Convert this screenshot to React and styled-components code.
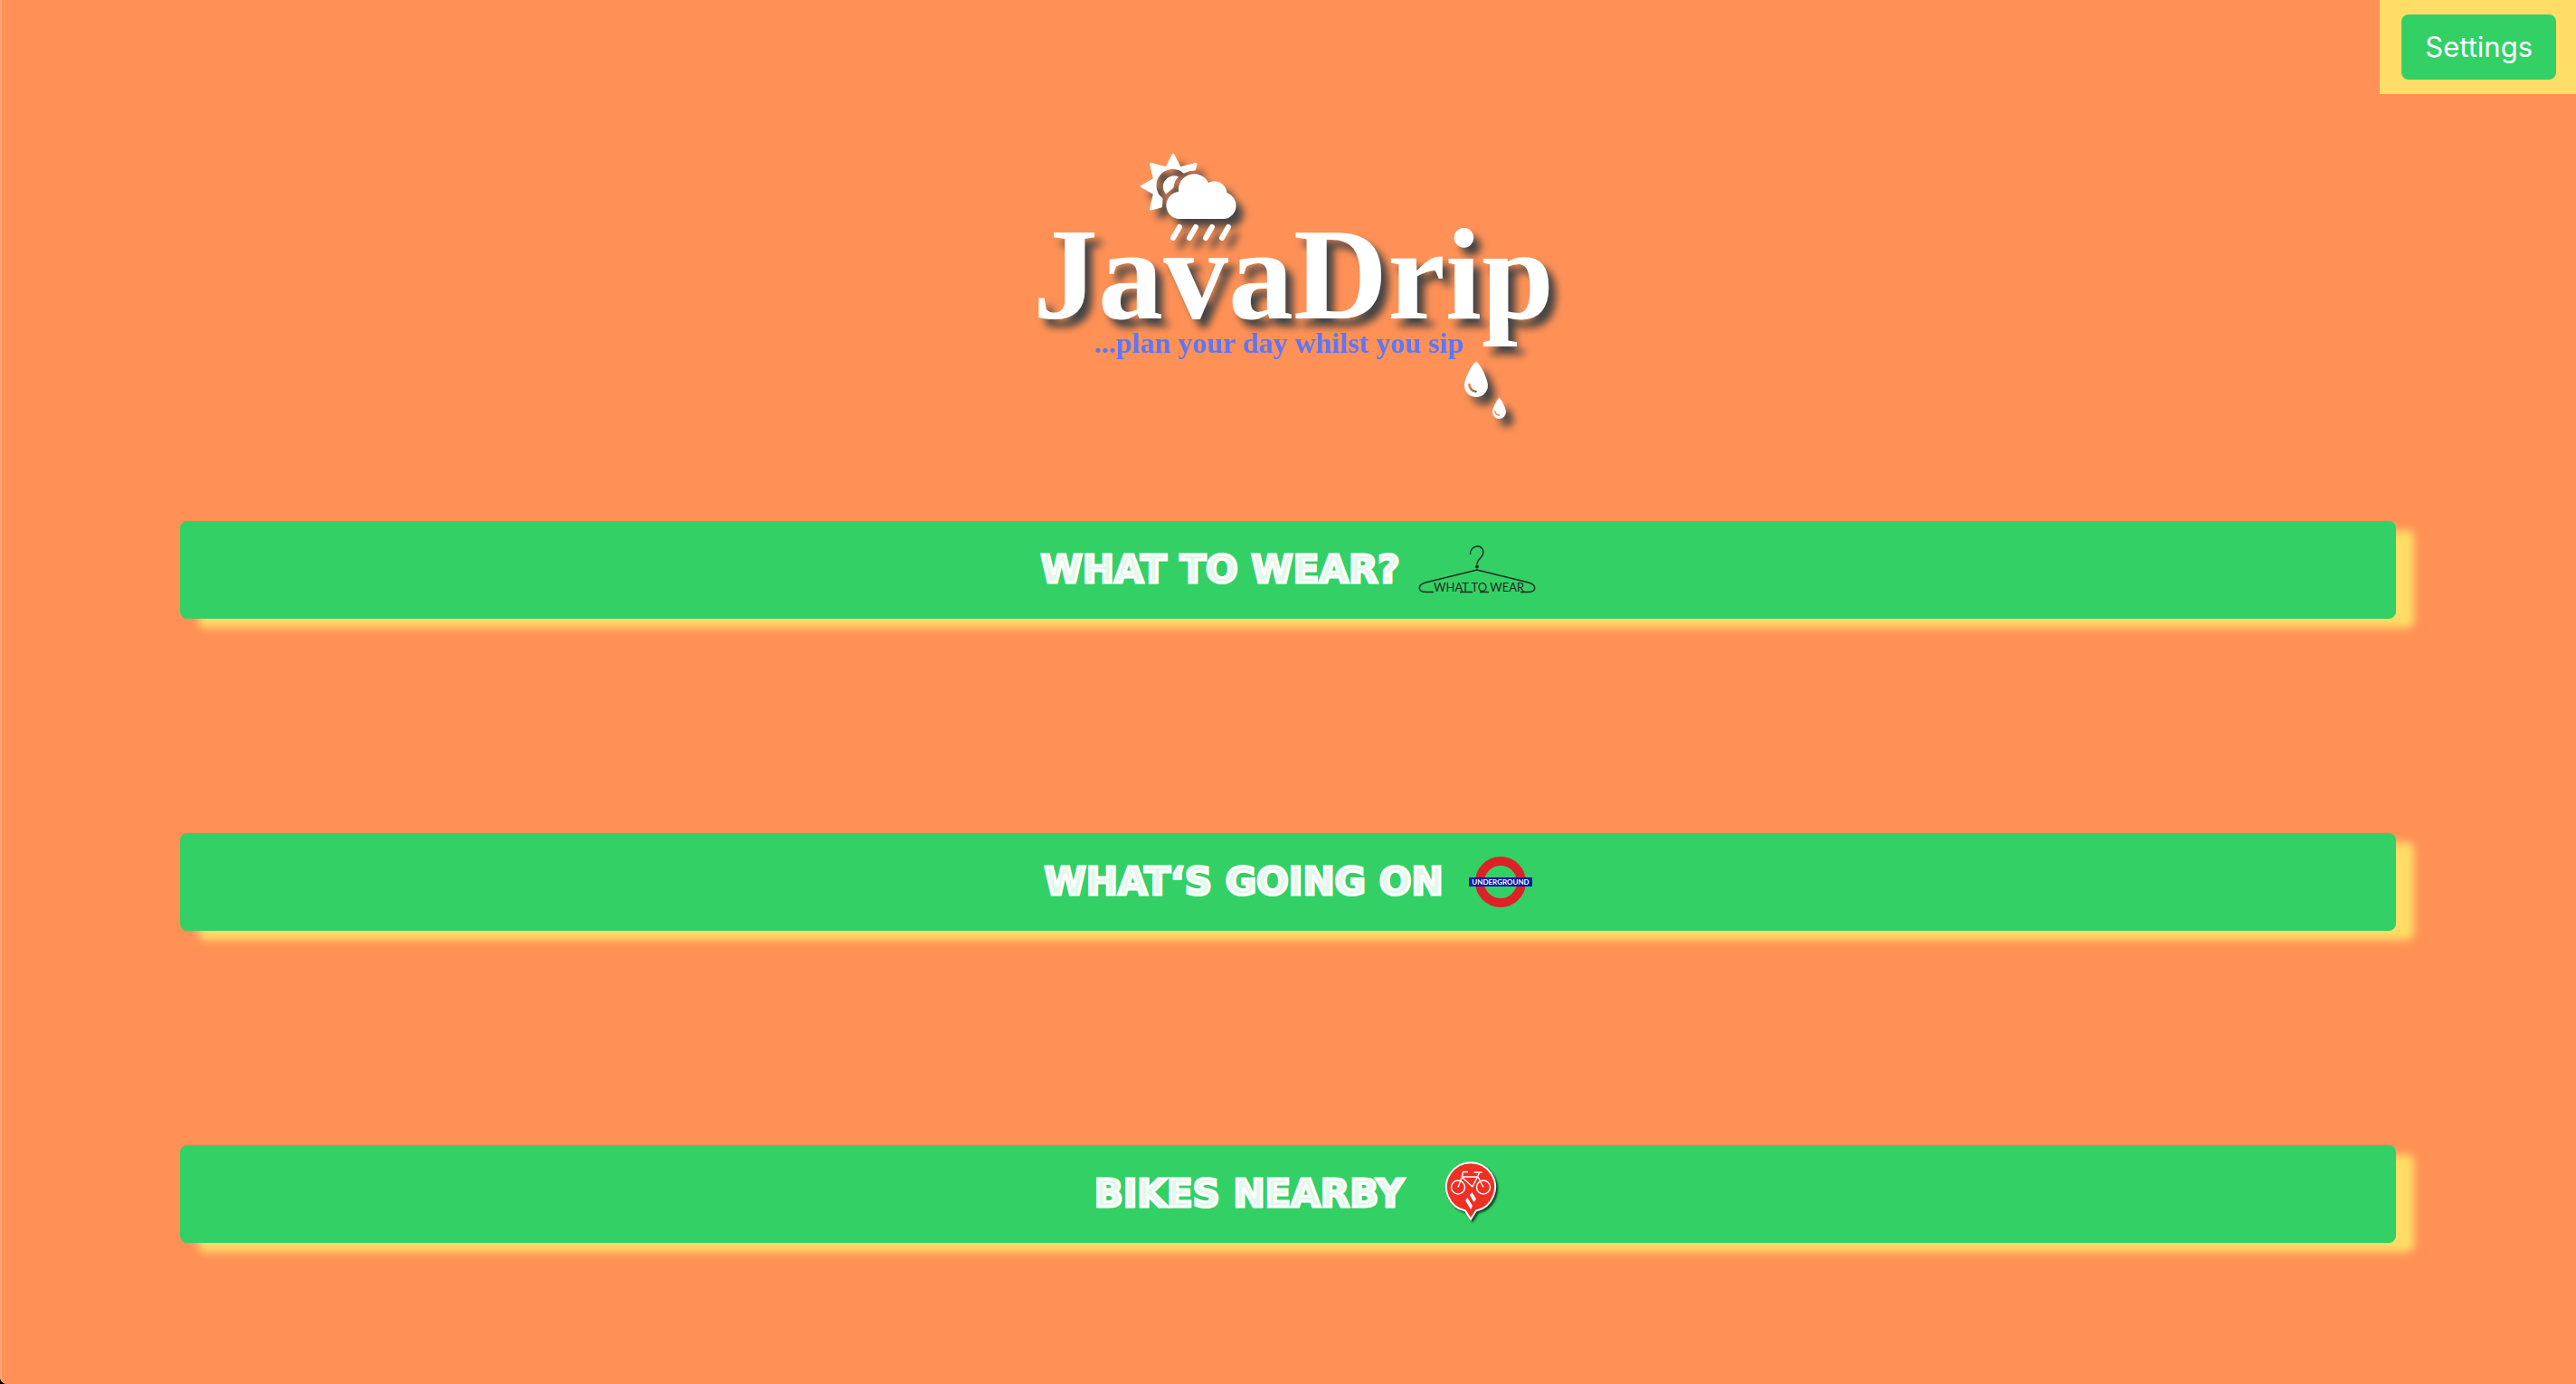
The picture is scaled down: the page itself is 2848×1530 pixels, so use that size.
import React from "react";
import styled, { createGlobalStyle } from "styled-components";

const colors = {
  page: "#ff9156",
  green: "#33d066",
  yellow: "#ffdd66",
  ink: "#1f2a24",
};

const GlobalStyle = createGlobalStyle`
  html { background: #000; }
  body { margin: 0; }
  *, *::before, *::after { box-sizing: border-box; }
`;

const Page = styled.div`
  min-height: 100vh;
  display: flex;
  flex-direction: column;
  background: ${colors.page};
  box-shadow: inset 2px 0 0 #ffa575;
  border-bottom-left-radius: 8px;
  font-family: Inter, "Liberation Sans", sans-serif;
`;

const Toolbar = styled.header`
  align-self: flex-end;
  padding: 16px 22px 16px 24px;
  background: ${colors.yellow};
`;

const SettingsButton = styled.button`
  display: block;
  height: 72px;
  padding: 0 26px;
  border: 0;
  border-radius: 8px;
  background: ${colors.green};
  color: #fff;
  font: 400 31px/40px Inter, "Liberation Sans", sans-serif;
  cursor: pointer;
`;

const Brand = styled.h1`
  display: flex;
  justify-content: center;
  margin: 46px 0 98px;
`;

const LogoArt = styled.svg`
  display: block;
  width: 600px;
  max-width: 100%;
  overflow: visible;
`;

const Raised = styled.g`
  fill: #fff;
  filter: drop-shadow(8px 9px 4px #444);
`;

const Wordmark = styled.text`
  font: 700 144px "Liberation Serif", serif;
`;

const Tagline = styled.text`
  fill: #5d76f5;
  font: 700 32px "Liberation Serif", serif;
`;

const Menu = styled.nav`
  display: flex;
  flex-direction: column;
  gap: 237px;
  padding: 0 7% 96px;
`;

const MenuButton = styled.button`
  display: flex;
  align-items: center;
  justify-content: center;
  gap: ${(p) => p.$gap}px;
  width: 100%;
  height: 108px;
  border: 0;
  border-radius: 8px;
  background: ${colors.green};
  box-shadow: 20px 10px 10px ${colors.yellow};
  cursor: pointer;
`;

const MenuLabel = styled.span`
  min-width: 376px;
  text-align: center;
  color: #e2f8ea;
  -webkit-text-stroke: 3px #fff;
  font: 700 42px/60px "DejaVu Sans", sans-serif;
  white-space: nowrap;
`;

const Icon = styled.svg`
  display: block;
  flex: none;
  overflow: visible;
`;

const HangerText = styled.text`
  fill: ${colors.ink};
  font: 400 13px Lato, sans-serif;
`;

const RoundelText = styled.text`
  fill: #fff;
  font: 700 8px Lato, sans-serif;
  text-anchor: middle;
`;

const Pin = styled.g`
  filter: drop-shadow(2px 2px 1px rgba(0, 0, 0, 0.7));
`;

function Logo() {
  return (
    <LogoArt viewBox="-6 0 600 328">
      <Raised>
        <g transform="translate(110 10)">
          <path
            d="M57 11.500 L64.500 26 L82 21.500 L80.500 27 Q74 27 69 30 A19.500 19.500 0 0 0 44 60 L43.500 68 L32.500 71 L36.500 54 L22.500 46 L36.500 38 L32.500 21.500 L49.500 26 Z"
            stroke="#fff"
            strokeWidth="3"
            strokeLinejoin="round"
          />
          <path d="M63 35.500 A12 12 0 0 0 49 54.500 L57.500 47.500 Q58 40 63 35.500 Z" />
          <path d="M66 82 A15 15 0 0 1 63 52 A17.500 17.500 0 0 1 96 42 A14 14 0 0 1 116.500 53 A15 15 0 0 1 114 82 Z" />
          <path
            d="M64 91 L57 103 M82 91 L75 103 M100 91 L93 103 M118 91 L111 103"
            stroke="#fff"
            strokeWidth="6"
            strokeLinecap="round"
          />
        </g>
        <Wordmark x="12" y="202">JavaDrip</Wordmark>
        <g transform="translate(470 240)">
          <path
            fillRule="evenodd"
            d="M32 10 C35 10 45 28 45 36 A13 13 0 0 1 19 36 C19 28 29 10 32 10 Z M23 34 Q23 43 32 44 L33 42 Q26 41 25.500 34 Z"
          />
          <path
            fillRule="evenodd"
            d="M57.500 50 C59 50 65 61 65 65.500 A7.500 7.500 0 0 1 50 65.500 C50 61 56 50 57.500 50 Z M52 64 Q52 69 58 70 L58 68.500 Q54 68 53.500 64 Z"
          />
        </g>
      </Raised>
      <Tagline x="80" y="240">...plan your day whilst you sip</Tagline>
    </LogoArt>
  );
}

function HangerIcon() {
  return (
    <Icon width="130" height="56" viewBox="10 9 130 56" aria-hidden="true">
      <g fill="none" stroke={colors.ink} strokeWidth="1.400">
        <path d="M67.500 20 C67 9 82 8 82 17.500 C82 24 75 24 75 31" />
        <path d="M27 61.500 H18 C9 61 9 53.500 18 51 L75 37 L132 51 C141 53.500 141 61 132 61.500 H123" />
        <path d="M56 61.500 H70 M78 61.500 H88" />
      </g>
      <circle cx="75" cy="33.500" r="2" fill={colors.ink} />
      <HangerText x="27" y="61">WHAT TO WEAR</HangerText>
    </Icon>
  );
}

function UndergroundIcon() {
  return (
    <Icon width="70" height="56" viewBox="0 0 70 56" aria-hidden="true">
      <circle cx="35" cy="28" r="23" fill="none" stroke="#dc2226" strokeWidth="10" />
      <rect y="23" width="70" height="10" fill="#0019a8" />
      <RoundelText x="35" y="31">UNDERGROUND</RoundelText>
    </Icon>
  );
}

function BikeIcon() {
  return (
    <Icon width="58" height="74" viewBox="16 11 58 74" aria-hidden="true">
      <Pin>
        <path
          d="M45 76 L39 66.500 A27 27 0 1 1 51 66.500 Z"
          fill="#ee2f24"
          stroke="#fff"
          strokeWidth="2"
        />
      </Pin>
      <g fill="none" stroke="#fff" strokeWidth="1.400" strokeLinejoin="round">
        <circle cx="31" cy="40.500" r="7.500" />
        <circle cx="59" cy="40.500" r="7.500" />
        <path d="M42 23.500 H36.500 L35.500 29 L31 40.500 M35.500 29 H53 L59 40.500 M36 30 L47 40 L54.500 24.500 M48.500 24 H57.500" />
      </g>
      <path
        fill="#fff"
        d="M44 49 L46.500 46 L51 53.500 L48.500 57 Z M39 55 L41.500 52 L47 61 L45 65 Z"
      />
    </Icon>
  );
}

const entries = [
  { label: "WHAT TO WEAR?", Art: HangerIcon, gap: 20 },
  { label: "WHAT‘S GOING ON", Art: UndergroundIcon, gap: 28 },
  { label: "BIKES NEARBY", Art: BikeIcon, gap: 28 },
];

export default function App() {
  return (
    <>
      <GlobalStyle />
      <Page>
        <Toolbar>
          <SettingsButton type="button">Settings</SettingsButton>
        </Toolbar>
        <main>
          <Brand>
            <Logo />
          </Brand>
          <Menu>
            {entries.map(({ label, Art, gap }) => (
              <MenuButton key={label} type="button" $gap={gap}>
                <MenuLabel>{label}</MenuLabel>
                <Art />
              </MenuButton>
            ))}
          </Menu>
        </main>
      </Page>
    </>
  );
}
